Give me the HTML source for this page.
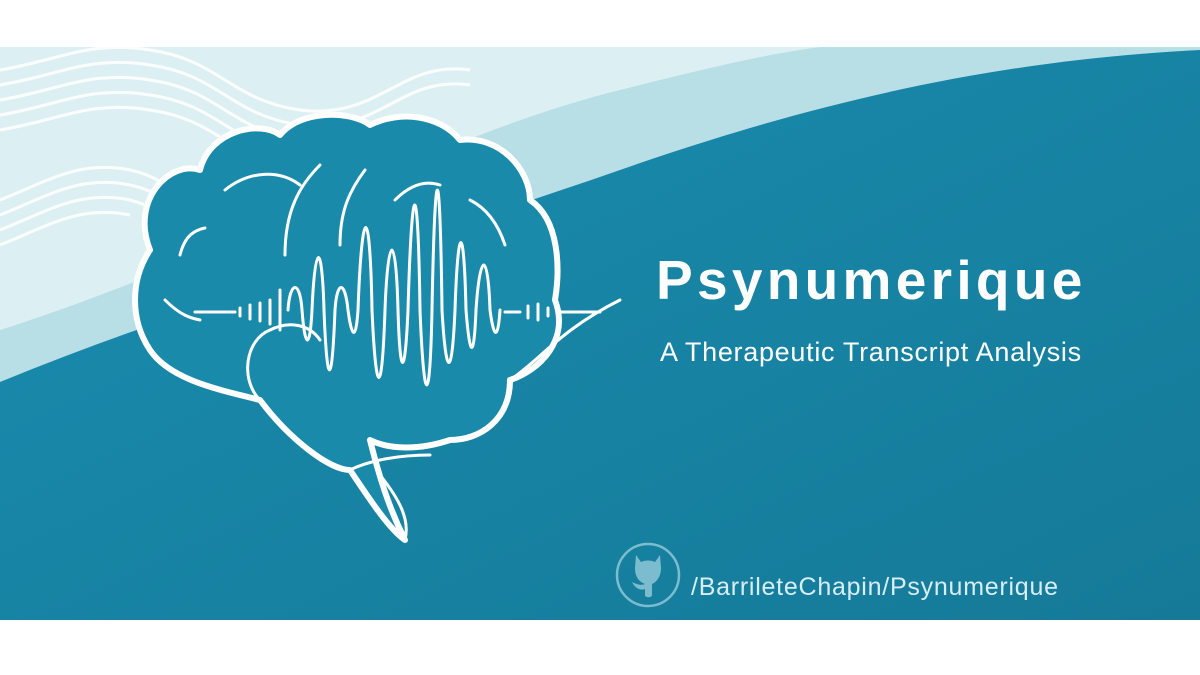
<!DOCTYPE html>
<html><head><meta charset="utf-8"><style>
html,body{margin:0;padding:0;width:1200px;height:675px;overflow:hidden;background:#fff;font-family:"Liberation Sans",sans-serif}
.t{position:absolute;color:#fff;white-space:nowrap}
</style></head><body>
<svg width="1200" height="675" style="position:absolute;left:0;top:0">
<defs>
<linearGradient id="g" x1="0" y1="0" x2="1" y2="1"><stop offset="0" stop-color="#1a8db0"/><stop offset="1" stop-color="#157a98"/></linearGradient>
</defs>
<rect x="0" y="47" width="1200" height="573" fill="#dcf0f3"/>
<path d="M0 330 C250 250 420 140 620 90 C700 70 760 55 820 47 L1200 47 L1200 620 L0 620Z" fill="#b9dfe6"/>
<path d="M0 382 C200 300 420 240 620 170 C820 100 1000 60 1200 50 L1200 620 L0 620Z" fill="url(#g)"/>
<g fill="none" stroke="#fff" stroke-width="3" opacity="0.9">
<path d="M0 70 C60 60 90 40 150 50 C220 60 230 100 300 110 C380 120 400 60 470 70"/>
<path d="M0 85 C60 75 90 55 150 65 C220 75 230 115 300 125 C380 135 400 75 470 85"/>
<path d="M0 100 C60 90 90 70 150 80 C220 90 230 130 300 140"/>
<path d="M0 115 C60 105 90 85 150 95 C220 105 230 145 300 155"/>
<path d="M0 130 C60 120 90 100 150 110 C220 120 230 160 300 170"/>
<path d="M0 200 C50 180 80 160 130 170 C180 180 190 220 240 230"/>
<path d="M0 215 C50 195 80 175 130 185 C180 195 190 235 240 245"/>
<path d="M0 230 C50 210 80 190 130 200 C170 210 180 240 220 250"/>
<path d="M0 245 C50 225 80 205 130 215"/>
</g>
<path d="M150 250 C130 200 170 160 200 170 C210 130 260 120 280 135 C300 110 350 110 370 125 C400 110 440 115 460 140 C500 135 530 170 530 200 C560 220 560 270 555 300 C570 340 540 370 510 380 C510 420 480 440 450 440 C420 450 390 450 370 440 C380 480 390 510 405 540 C390 530 370 500 350 470 C330 470 290 440 260 400 C220 390 170 380 150 350 C130 320 130 280 150 250Z" fill="#1a8aab" stroke="#fff" stroke-width="6" stroke-linejoin="round"/>
<g fill="none" stroke="#fff" stroke-width="3" stroke-linecap="round">
<path d="M180 255 C185 235 195 230 205 228"/>
<path d="M225 190 C250 170 280 170 300 185"/>
<path d="M285 255 C285 210 300 185 320 165"/>
<path d="M340 245 C340 210 350 190 365 170"/>
<path d="M395 200 C410 185 425 180 440 185"/>
<path d="M470 200 C490 210 500 230 505 245"/>
<path d="M260 400 C240 380 245 340 270 330 C290 320 310 325 320 340"/>
<path d="M350 470 C370 460 400 455 430 455"/>
<path d="M380 475 C400 500 410 520 405 540"/>
<path d="M165 300 C180 315 190 318 200 320"/>
<path d="M510 380 C540 360 560 330 620 300"/>
<path d="M195 312 L235 312 M240 308 v8 M250 305 v14 M260 303 v18 M270 300 v24 M280 290 v40"/>
<path d="M288 310 C290 280 300 280 302 310 C305 350 310 350 312 310 C315 240 322 240 324 310 C327 390 332 390 335 310 C337 280 345 280 348 310 C352 340 356 340 358 310 C362 200 370 200 372 310 C376 400 382 400 385 310 C388 230 396 230 398 310 C400 380 405 380 408 310 C412 170 418 170 420 310 C424 410 430 410 432 310 C435 150 440 150 442 310 C446 380 452 380 455 310 C458 220 464 220 466 310 C470 360 474 360 476 310 C480 250 488 250 490 310 C494 340 498 340 500 310"/>
<path d="M505 312 L520 312 M528 306 v12 M538 304 v16 M548 308 v8 M560 312 L600 312"/>
</g>
<circle cx="648" cy="575" r="31" fill="none" stroke="#7cbccf" stroke-width="2.5"/>
<path d="M636 555 L641 562 C645 560 651 560 655 562 L660 555 L661 568 C661 578 655 583 652 584 L652 595 C652 598 645 598 645 595 L645 589 C640 591 635 588 632 582 C636 584 640 586 645 584 C640 582 635 578 635 568Z" fill="#7cbccf"/>
<rect x="0" y="620" width="1200" height="55" fill="#fff"/>
</svg>
<div class="t" style="left:656px;top:248px;font-size:55px;font-weight:bold;letter-spacing:4.3px">Psynumerique</div>
<div class="t" style="left:660px;top:337px;font-size:27px;letter-spacing:0.7px">A Therapeutic Transcript Analysis</div>
<div class="t" style="left:691px;top:573px;font-size:25px;color:#d8eef4;letter-spacing:0.75px">/BarrileteChapin/Psynumerique</div>
</body></html>
